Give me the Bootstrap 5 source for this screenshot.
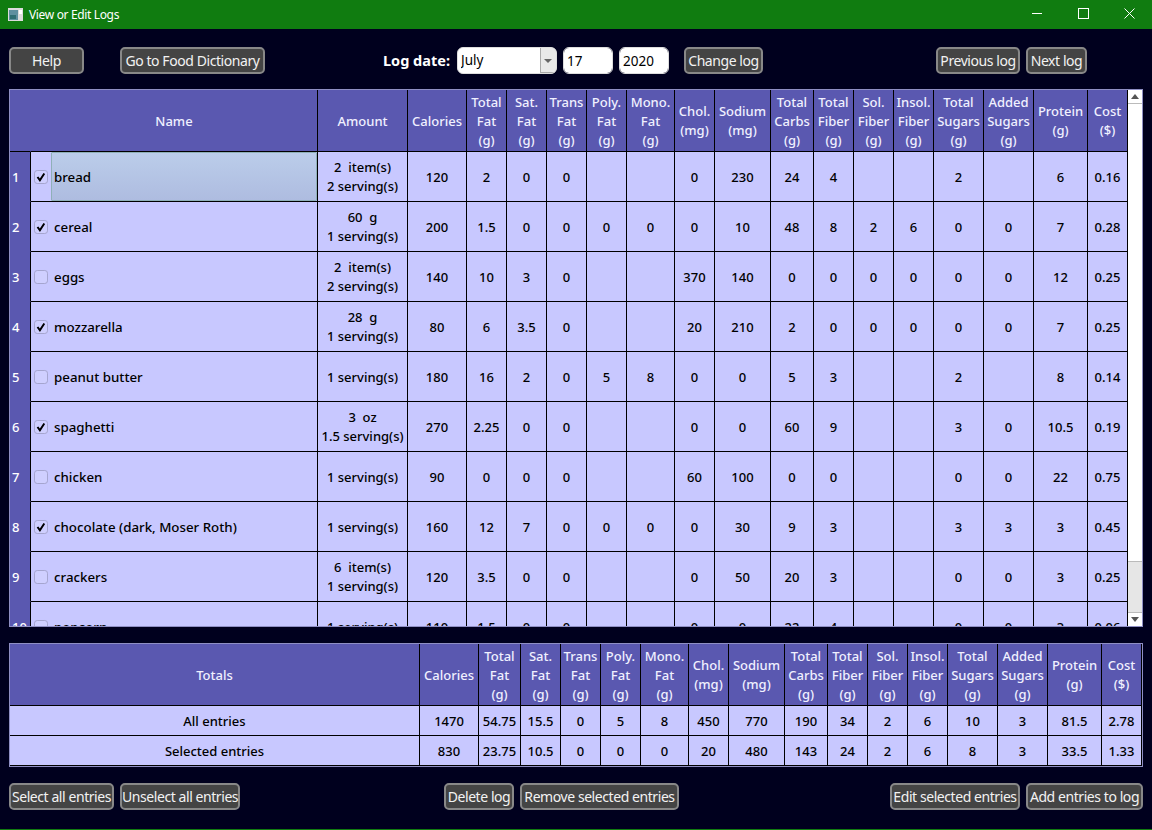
<!DOCTYPE html>
<html lang="en">
<head>
    <meta charset="UTF-8">
    <meta name="viewport" content="width=device-width, initial-scale=1.0">
    <title>View or Edit Logs</title>
    <link rel="stylesheet" href="https://cdn.jsdelivr.net/npm/bootstrap@5.3.0/dist/css/bootstrap.min.css">
    <style>
        body { height: 830px; overflow: hidden; background: #00001e; font-family: "Noto Sans", "Open Sans", sans-serif; font-size: 13px; border-bottom: 1px solid #107c10; }
        .title-strip { height: 29px; background: #107c10; color: #fff; font-size: 12px; letter-spacing: -.35px; padding-left: 8px; }
        .title-icon { margin-right: 6px; }
        .title-strip .win-btn { width: 46px; height: 27px; }
        .tool-row { height: 27px; padding-left: 9px; padding-right: 9px; }
        .tool-row-top { margin-top: 18px; margin-bottom: 15px; }
        .tool-row-bottom { margin-top: 16px; }
        .app-btn { height: 27px; padding: 0; background: #444; color: #f2f2f2; border: 2px solid #888; border-radius: 5px; font-size: 14px; letter-spacing: -.43px; line-height: 21px; white-space: nowrap; --bs-btn-hover-bg: #555; --bs-btn-hover-color: #fff; --bs-btn-hover-border-color: #999; }
        .btn-help { width: 75px; margin-right: 36px; }
        .btn-dict { width: 145px; }
        .date-group { margin-left: 118px; }
        .date-label { color: #fff; font-weight: 700; font-size: 14.5px; margin-right: 6px; width: 68px; white-space: nowrap; }
        .month-pick, .num-pick { height: 27px; border-radius: 6px; border: 1px solid #ddd; color: #000; font-size: 13.5px; padding: 0 3px; min-height: 0; }
        .month-pick { width: 100px; padding-right: 18px; background-color: #fff; background-image: url("data:image/svg+xml,%3Csvg xmlns='http://www.w3.org/2000/svg' width='16' height='25'%3E%3Crect width='16' height='25' fill='%23e9e9e9'/%3E%3Cpath d='M.5 0v25M0 24.5h16' stroke='%23aaa'/%3E%3Cpath d='M4 11h8l-4 4z' fill='%23666'/%3E%3C/svg%3E"); background-position: right 0 center; background-size: 16px 25px; background-repeat: no-repeat; }
        .num-pick { width: 50px; margin-left: 6px; }
        .btn-change { width: 79px; margin-left: 15px; }
        .nav-group { margin-left: 173px; }
        .btn-prev { width: 84px; margin-right: 6px; }
        .btn-next { width: 61px; }
        .grid-frame { margin-left: 9px; margin-right: 9px; border: 1px solid #8f8fc4; overflow: hidden; }
        .grid-frame-top { height: 538px; margin-bottom: 16px; }
        .grid-frame-sum { height: 124px; }
        .grid-scroll { flex: 1 1 auto; min-width: 0; overflow: hidden; }
        .sheet { table-layout: fixed; border-collapse: separate; border-spacing: 0; margin-bottom: 0; font-size: 13px; line-height: 19px; }
        .sheet th, .sheet td { padding: 1px 0 0; text-align: center; vertical-align: middle; border-width: 0 1px 1px 0; border-style: solid; border-color: #000; color: #000; font-weight: 500; background-color: #c8c8ff; box-shadow: none; overflow: hidden; white-space: nowrap; }
        .sheet thead th { background-color: #5a58b0; color: #f0f0ff; height: 62px; }
        .sheet thead th.corner { border-right-color: #5a58b0; }
        .sheet tbody td { height: 50px; }
        .sheet tbody th { background-color: #5a58b0; color: #fff; border-right-color: #000; border-bottom-color: #5a58b0; text-align: left; padding-left: 2px; }
        .sheet.sum-sheet tbody td { height: 30px; }
        .sheet td.name-cell { text-align: left; padding: 0; }
        .name-wrap { height: 49px; padding-left: 3px; }
        .entry-check { width: 14px; height: 14px; margin: 0 3px 0 0; border-radius: 0; border: 1px solid #a5a5cf; background-color: #cfcfff; flex: none; }
        .entry-check:checked[type=checkbox] { background-color: #cfcfff; border-color: #a5a5cf; background-image: url("data:image/svg+xml,%3Csvg xmlns='http://www.w3.org/2000/svg' viewBox='0 0 14 14'%3E%3Cpath d='M3.5 7l2.4 3.2L10.3 3.5' fill='none' stroke='%23000' stroke-width='2'/%3E%3C/svg%3E"); background-size: 14px 14px; }
        .entry-name { flex: 1 1 auto; height: 100%; padding: 2px 0 0 2px; border: 1px solid transparent; font-size: 13.3px; }
        .entry-name.picked { background: linear-gradient(#bbcdea, #aebce0); border-color: #8fb0b8; border-radius: 1px; }
        .fake-scroll { width: 14px; flex: none; background: #fff; }
        .scroll-btn { height: 14px; border-bottom: 1px solid #bbb; }
        .scroll-btn.down { border-bottom: 0; border-top: 1px solid #bbb; }
        .scroll-thumb { height: 458px; background: #fff; border-bottom: 1px solid #bbb; }
        .scroll-track { flex: 1 1 auto; background: #e6e6e6; }
        .btn-selall { width: 105px; margin-right: 6px; }
        .btn-unsel { width: 120px; }
        .btn-dellog { width: 70px; margin-left: 204px; margin-right: 6px; }
        .btn-remove { width: 159px; }
        .btn-edit { width: 130px; margin-left: 211px; margin-right: 6px; }
        .btn-add { width: 117px; }
    </style>
</head>
<body class="d-flex flex-column">
    <div class="title-strip d-flex align-items-center">
        <svg width="15" height="13" viewBox="0 0 15 13" class="title-icon">
            <rect width="15" height="13" fill="#dcdcdc"/>
            <rect x="1" y="2" width="9" height="10" fill="#5f8f9f"/>
            <rect x="11" y="2" width="3" height="4" fill="#fff"/>
            <rect x="2" y="7" width="6" height="4" fill="#2f6d72"/>
        </svg>
        <span>View or Edit Logs</span>
        <div class="ms-auto d-flex align-self-start">
            <div class="win-btn d-flex align-items-center justify-content-center"><svg width="10" height="10" viewBox="0 0 10 10"><path d="M0 4.5h10" stroke="#fff"/></svg></div>
            <div class="win-btn d-flex align-items-center justify-content-center"><svg width="11" height="11" viewBox="0 0 11 11"><rect x=".5" y=".5" width="10" height="10" fill="none" stroke="#fff"/></svg></div>
            <div class="win-btn d-flex align-items-center justify-content-center"><svg width="11" height="11" viewBox="0 0 11 11"><path d="M.5.5l10 10M10.5.5l-10 10" stroke="#fff"/></svg></div>
        </div>
    </div>

    <div class="tool-row tool-row-top d-flex align-items-center">
        <button type="button" class="btn app-btn btn-help">Help</button>
        <button type="button" class="btn app-btn btn-dict">Go to Food Dictionary</button>
        <div class="date-group d-flex align-items-center">
            <label class="date-label" for="log-month">Log date:</label>
            <select id="log-month" class="form-select month-pick"><option>July</option></select>
            <input type="text" class="form-control num-pick" value="17">
            <input type="text" class="form-control num-pick" value="2020">
            <button type="button" class="btn app-btn btn-change">Change log</button>
        </div>
        <div class="nav-group d-flex">
            <button type="button" class="btn app-btn btn-prev">Previous log</button>
            <button type="button" class="btn app-btn btn-next">Next log</button>
        </div>
    </div>

    <div class="grid-frame grid-frame-top d-flex">
        <div class="grid-scroll">
            <table class="table sheet">
                <colgroup>
                    <col width="21"><col width="287"><col width="90"><col width="59"><col width="40"><col width="40"><col width="40"><col width="40"><col width="48"><col width="40"><col width="56"><col width="43"><col width="40"><col width="40"><col width="40"><col width="50"><col width="50"><col width="54"><col width="40">
                </colgroup>
                <thead>
                    <tr>
                        <th class="corner"></th><th>Name</th><th>Amount</th><th>Calories</th><th>Total<br>Fat<br>(g)</th><th>Sat.<br>Fat<br>(g)</th><th>Trans<br>Fat<br>(g)</th><th>Poly.<br>Fat<br>(g)</th><th>Mono.<br>Fat<br>(g)</th><th>Chol.<br>(mg)</th><th>Sodium<br>(mg)</th><th>Total<br>Carbs<br>(g)</th><th>Total<br>Fiber<br>(g)</th><th>Sol.<br>Fiber<br>(g)</th><th>Insol.<br>Fiber<br>(g)</th><th>Total<br>Sugars<br>(g)</th><th>Added<br>Sugars<br>(g)</th><th>Protein<br>(g)</th><th>Cost<br>($)</th>
                    </tr>
                </thead>
                <tbody>
                    <tr>
                        <th>1</th>
                        <td class="name-cell"><div class="name-wrap d-flex align-items-center"><input class="form-check-input entry-check" type="checkbox" checked><div class="entry-name picked d-flex align-items-center">bread</div></div></td>
                        <td>2&nbsp; item(s)<br>2 serving(s)</td>
                        <td>120</td><td>2</td><td>0</td><td>0</td><td></td><td></td><td>0</td><td>230</td><td>24</td><td>4</td><td></td><td></td><td>2</td><td></td><td>6</td><td>0.16</td>
                    </tr>
                    <tr>
                        <th>2</th>
                        <td class="name-cell"><div class="name-wrap d-flex align-items-center"><input class="form-check-input entry-check" type="checkbox" checked><div class="entry-name d-flex align-items-center">cereal</div></div></td>
                        <td>60&nbsp; g<br>1 serving(s)</td>
                        <td>200</td><td>1.5</td><td>0</td><td>0</td><td>0</td><td>0</td><td>0</td><td>10</td><td>48</td><td>8</td><td>2</td><td>6</td><td>0</td><td>0</td><td>7</td><td>0.28</td>
                    </tr>
                    <tr>
                        <th>3</th>
                        <td class="name-cell"><div class="name-wrap d-flex align-items-center"><input class="form-check-input entry-check" type="checkbox"><div class="entry-name d-flex align-items-center">eggs</div></div></td>
                        <td>2&nbsp; item(s)<br>2 serving(s)</td>
                        <td>140</td><td>10</td><td>3</td><td>0</td><td></td><td></td><td>370</td><td>140</td><td>0</td><td>0</td><td>0</td><td>0</td><td>0</td><td>0</td><td>12</td><td>0.25</td>
                    </tr>
                    <tr>
                        <th>4</th>
                        <td class="name-cell"><div class="name-wrap d-flex align-items-center"><input class="form-check-input entry-check" type="checkbox" checked><div class="entry-name d-flex align-items-center">mozzarella</div></div></td>
                        <td>28&nbsp; g<br>1 serving(s)</td>
                        <td>80</td><td>6</td><td>3.5</td><td>0</td><td></td><td></td><td>20</td><td>210</td><td>2</td><td>0</td><td>0</td><td>0</td><td>0</td><td>0</td><td>7</td><td>0.25</td>
                    </tr>
                    <tr>
                        <th>5</th>
                        <td class="name-cell"><div class="name-wrap d-flex align-items-center"><input class="form-check-input entry-check" type="checkbox"><div class="entry-name d-flex align-items-center">peanut butter</div></div></td>
                        <td>1 serving(s)</td>
                        <td>180</td><td>16</td><td>2</td><td>0</td><td>5</td><td>8</td><td>0</td><td>0</td><td>5</td><td>3</td><td></td><td></td><td>2</td><td></td><td>8</td><td>0.14</td>
                    </tr>
                    <tr>
                        <th>6</th>
                        <td class="name-cell"><div class="name-wrap d-flex align-items-center"><input class="form-check-input entry-check" type="checkbox" checked><div class="entry-name d-flex align-items-center">spaghetti</div></div></td>
                        <td>3&nbsp; oz<br>1.5 serving(s)</td>
                        <td>270</td><td>2.25</td><td>0</td><td>0</td><td></td><td></td><td>0</td><td>0</td><td>60</td><td>9</td><td></td><td></td><td>3</td><td>0</td><td>10.5</td><td>0.19</td>
                    </tr>
                    <tr>
                        <th>7</th>
                        <td class="name-cell"><div class="name-wrap d-flex align-items-center"><input class="form-check-input entry-check" type="checkbox"><div class="entry-name d-flex align-items-center">chicken</div></div></td>
                        <td>1 serving(s)</td>
                        <td>90</td><td>0</td><td>0</td><td>0</td><td></td><td></td><td>60</td><td>100</td><td>0</td><td>0</td><td></td><td></td><td>0</td><td>0</td><td>22</td><td>0.75</td>
                    </tr>
                    <tr>
                        <th>8</th>
                        <td class="name-cell"><div class="name-wrap d-flex align-items-center"><input class="form-check-input entry-check" type="checkbox" checked><div class="entry-name d-flex align-items-center">chocolate (dark, Moser Roth)</div></div></td>
                        <td>1 serving(s)</td>
                        <td>160</td><td>12</td><td>7</td><td>0</td><td>0</td><td>0</td><td>0</td><td>30</td><td>9</td><td>3</td><td></td><td></td><td>3</td><td>3</td><td>3</td><td>0.45</td>
                    </tr>
                    <tr>
                        <th>9</th>
                        <td class="name-cell"><div class="name-wrap d-flex align-items-center"><input class="form-check-input entry-check" type="checkbox"><div class="entry-name d-flex align-items-center">crackers</div></div></td>
                        <td>6&nbsp; item(s)<br>1 serving(s)</td>
                        <td>120</td><td>3.5</td><td>0</td><td>0</td><td></td><td></td><td>0</td><td>50</td><td>20</td><td>3</td><td></td><td></td><td>0</td><td>0</td><td>3</td><td>0.25</td>
                    </tr>
                    <tr>
                        <th>10</th>
                        <td class="name-cell"><div class="name-wrap d-flex align-items-center"><input class="form-check-input entry-check" type="checkbox"><div class="entry-name d-flex align-items-center">popcorn</div></div></td>
                        <td>1 serving(s)</td>
                        <td>110</td><td>1.5</td><td>0</td><td>0</td><td></td><td></td><td>0</td><td>0</td><td>22</td><td>4</td><td></td><td></td><td>0</td><td>0</td><td>3</td><td>0.06</td>
                    </tr>
                </tbody>
            </table>
        </div>
        <div class="fake-scroll d-flex flex-column">
            <div class="scroll-btn d-flex align-items-center justify-content-center"><svg width="8" height="5" viewBox="0 0 8 5"><path d="M0 5h8L4 0z" fill="#555"/></svg></div>
            <div class="scroll-thumb"></div>
            <div class="scroll-track"></div>
            <div class="scroll-btn down d-flex align-items-center justify-content-center"><svg width="8" height="5" viewBox="0 0 8 5"><path d="M0 0h8L4 5z" fill="#555"/></svg></div>
        </div>
    </div>

    <div class="grid-frame grid-frame-sum">
        <table class="table sheet sum-sheet">
            <colgroup>
                <col width="410"><col width="59"><col width="42"><col width="40"><col width="40"><col width="40"><col width="48"><col width="40"><col width="56"><col width="43"><col width="40"><col width="40"><col width="40"><col width="50"><col width="50"><col width="54"><col width="40">
            </colgroup>
            <thead>
                <tr>
                    <th>Totals</th><th>Calories</th><th>Total<br>Fat<br>(g)</th><th>Sat.<br>Fat<br>(g)</th><th>Trans<br>Fat<br>(g)</th><th>Poly.<br>Fat<br>(g)</th><th>Mono.<br>Fat<br>(g)</th><th>Chol.<br>(mg)</th><th>Sodium<br>(mg)</th><th>Total<br>Carbs<br>(g)</th><th>Total<br>Fiber<br>(g)</th><th>Sol.<br>Fiber<br>(g)</th><th>Insol.<br>Fiber<br>(g)</th><th>Total<br>Sugars<br>(g)</th><th>Added<br>Sugars<br>(g)</th><th>Protein<br>(g)</th><th>Cost<br>($)</th>
                </tr>
            </thead>
            <tbody>
                <tr>
                    <td>All entries</td><td>1470</td><td>54.75</td><td>15.5</td><td>0</td><td>5</td><td>8</td><td>450</td><td>770</td><td>190</td><td>34</td><td>2</td><td>6</td><td>10</td><td>3</td><td>81.5</td><td>2.78</td>
                </tr>
                <tr>
                    <td>Selected entries</td><td>830</td><td>23.75</td><td>10.5</td><td>0</td><td>0</td><td>0</td><td>20</td><td>480</td><td>143</td><td>24</td><td>2</td><td>6</td><td>8</td><td>3</td><td>33.5</td><td>1.33</td>
                </tr>
            </tbody>
        </table>
    </div>

    <div class="tool-row tool-row-bottom d-flex align-items-center">
        <button type="button" class="btn app-btn btn-selall">Select all entries</button>
        <button type="button" class="btn app-btn btn-unsel">Unselect all entries</button>
        <button type="button" class="btn app-btn btn-dellog">Delete log</button>
        <button type="button" class="btn app-btn btn-remove">Remove selected entries</button>
        <button type="button" class="btn app-btn btn-edit">Edit selected entries</button>
        <button type="button" class="btn app-btn btn-add">Add entries to log</button>
    </div>

    <script src="https://cdn.jsdelivr.net/npm/bootstrap@5.3.0/dist/js/bootstrap.bundle.min.js"></script>
</body>
</html>
